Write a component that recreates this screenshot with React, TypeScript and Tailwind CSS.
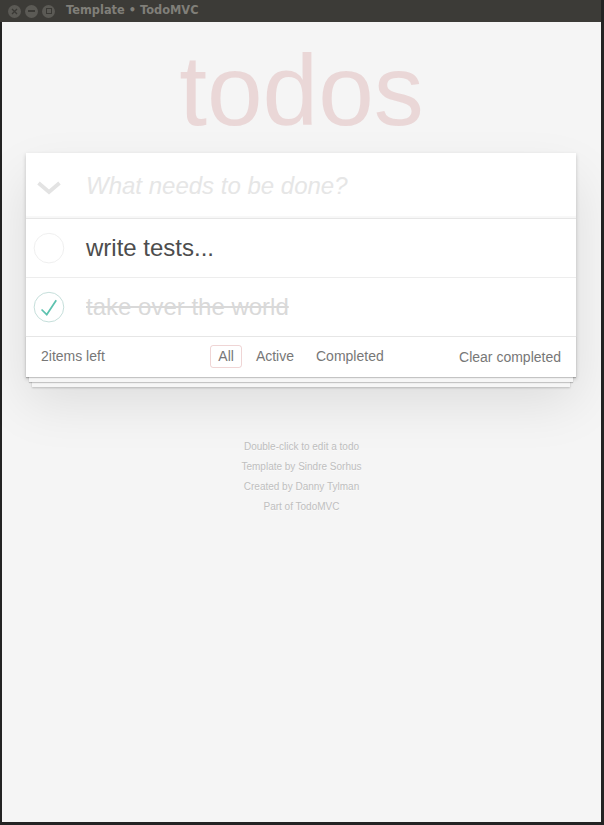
import React from "react";

const font = { fontFamily: '"Liberation Sans", Arial, sans-serif' };

function CircleToggle({ checked }: { checked: boolean }) {
  return (
    <svg width="40" height="40" viewBox="-10 -18 100 135" className="shrink-0">
      <circle cx="50" cy="50" r="50" fill="none" stroke={checked ? "#bddad5" : "#ededed"} strokeWidth="3" />
      {checked && <path fill="#5dc2af" d="M72 25L42 71 27 56l-4 4 20 20 34-52z" />}
    </svg>
  );
}

export default function App() {
  return (
    <div className="w-[604px] h-[825px] bg-[#232323] flex flex-col overflow-hidden" style={font}>
      {/* title bar */}
      <div className="h-[22px] w-[601px] bg-[#3c3b37] flex items-center shrink-0">
        <div className="flex items-center gap-[4px] ml-[8px]">
          <div className="w-[13px] h-[13px] rounded-full bg-[#5b5a55] flex items-center justify-center">
            <svg width="7" height="7" viewBox="0 0 7 7"><path d="M1 1L6 6M6 1L1 6" stroke="#3a3935" strokeWidth="1.3" /></svg>
          </div>
          <div className="w-[13px] h-[13px] rounded-full bg-[#5b5a55] flex items-center justify-center">
            <div className="w-[7px] h-[1.5px] bg-[#3a3935]" />
          </div>
          <div className="w-[13px] h-[13px] rounded-full bg-[#5b5a55] flex items-center justify-center">
            <div className="w-[6px] h-[6px] border border-[#3a3935]" />
          </div>
        </div>
        <div
          className="ml-[11px] text-[11.4px] font-bold text-[#807f79] leading-none"
          style={{ fontFamily: '"DejaVu Sans", sans-serif' }}
        >
          Template • TodoMVC
        </div>
      </div>
      {/* content */}
      <div className="ml-[2px] w-[599px] flex-1 mb-[3px] bg-[#f5f5f5] flex flex-col items-center">
        <h1 className="mt-[11px] h-[115px] text-[100px] leading-[115px] font-thin text-[rgba(175,47,47,0.15)] text-center">
          todos
        </h1>
        <section className="mt-[5px] -ml-[1px] w-[550px] bg-white relative shadow-[0_2px_4px_0_rgba(0,0,0,0.2),0_25px_50px_0_rgba(0,0,0,0.1)]">
          <header className="h-[65px] flex items-center shadow-[inset_0_-2px_1px_rgba(0,0,0,0.03)]">
            <svg width="24" height="14" viewBox="0 0 24 14" className="ml-[11px] mt-[4px] shrink-0">
              <path d="M1.5 2L12 11L22.5 2" fill="none" stroke="#e3e3e3" strokeWidth="3.8" strokeLinejoin="miter" />
            </svg>
            <input
              readOnly
              placeholder="What needs to be done?"
              className="ml-[25px] flex-1 bg-transparent outline-none text-[24px] text-[#4d4d4d] placeholder:italic placeholder:text-[#e6e6e6]"
              style={font}
            />
          </header>
          <ul className="border-t border-[#e6e6e6]">
            <li className="h-[58px] border-b border-[#ededed] flex items-center box-content">
              <CircleToggle checked={false} />
              <span className="ml-[20px] text-[24px] text-[#4d4d4d] leading-[1.2]">write tests...</span>
            </li>
            <li className="h-[58px] flex items-center">
              <CircleToggle checked={true} />
              <span className="ml-[20px] text-[24px] text-[#d9d9d9] line-through leading-[1.2]">take over the world</span>
            </li>
          </ul>
          <footer className="h-[41px] border-t border-[#e6e6e6] px-[15px] flex items-center text-[14px] text-[#777] shadow-[0_1px_1px_rgba(0,0,0,0.2),0_8px_0_-3px_#f6f6f6,0_9px_1px_-3px_rgba(0,0,0,0.2),0_16px_0_-6px_#f6f6f6,0_17px_2px_-6px_rgba(0,0,0,0.2)]">
            <span className="flex-1 leading-[20px] -mt-[3px]">2items left</span>
            <ul className="flex items-center gap-[6px] -mt-[2px]">
              <li className="px-[7px] py-[3px] border border-[rgba(175,47,47,0.2)] rounded-[3px] leading-[15px]">All</li>
              <li className="px-[7px] py-[3px] border border-transparent rounded-[3px] leading-[15px]">Active</li>
              <li className="px-[7px] py-[3px] border border-transparent rounded-[3px] leading-[15px]">Completed</li>
            </ul>
            <span className="flex-1 text-right leading-[20px]">Clear completed</span>
          </footer>
        </section>
        <div className="mt-[60px] text-[10px] text-[#bfbfbf] text-center [text-shadow:0_1px_0_rgba(255,255,255,0.5)]">
          <p className="leading-[20px]">Double-click to edit a todo</p>
          <p className="leading-[20px]">Template by Sindre Sorhus</p>
          <p className="leading-[20px]">Created by Danny Tylman</p>
          <p className="leading-[20px]">Part of TodoMVC</p>
        </div>
      </div>
    </div>
  );
}
